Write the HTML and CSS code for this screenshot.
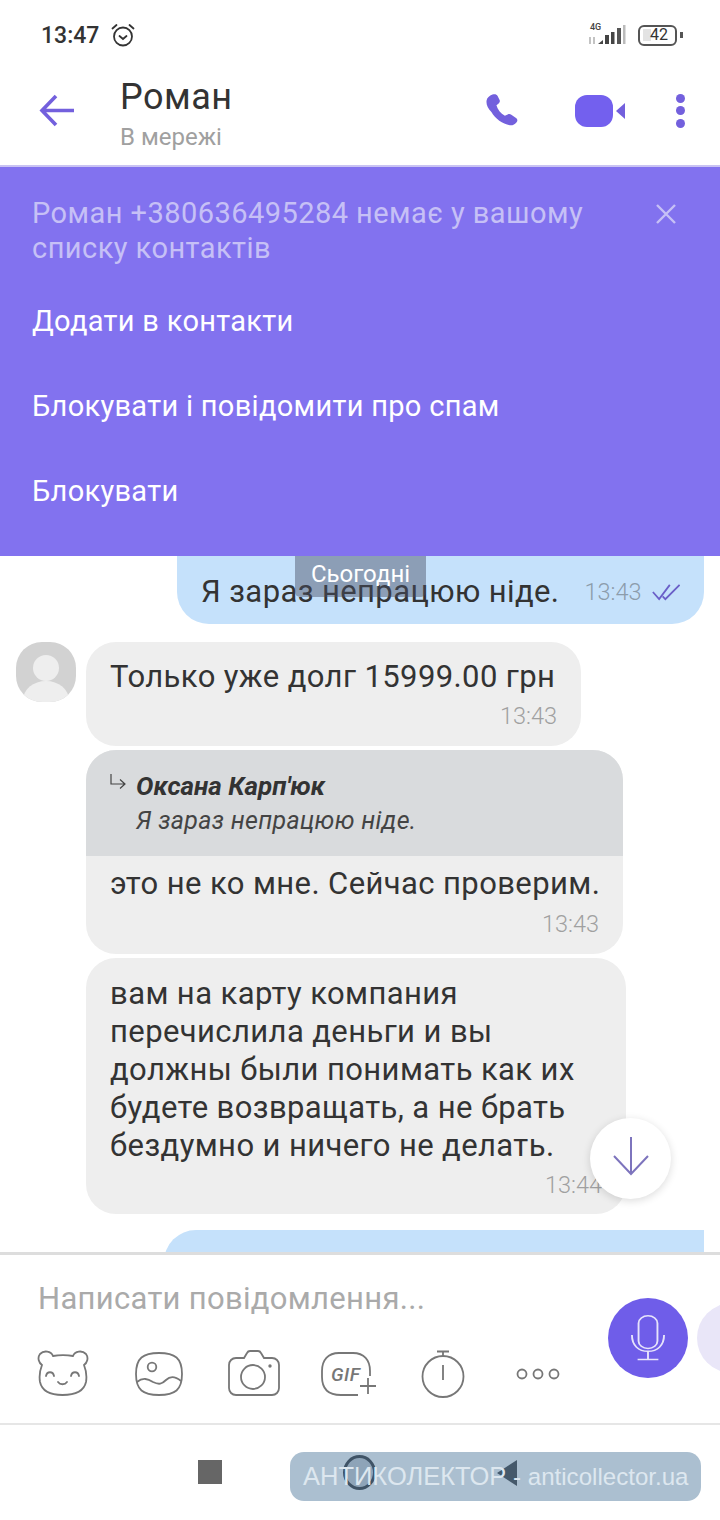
FILE: index.html
```html
<!DOCTYPE html>
<html lang="uk">
<head>
    <meta charset="UTF-8">
    <title>Роман</title>
    <link rel="stylesheet" href="styles.css">
</head>
<body>
<div class="screen">
    <div class="status-bar">
        <span class="clock">13:47</span>
        <svg class="alarm" width="26" height="26" viewBox="0 0 26 26" fill="none" stroke="#333" stroke-width="1.8" stroke-linecap="round"><circle cx="13" cy="14.5" r="9"/><path d="M9.5 14l3.5 3 3.5-3M2.500 6.500l4-3.500M23.500 6.500l-4-3.500"/></svg>
        <span class="status-right">
            <svg width="40" height="26" viewBox="0 0 40 26">
                <text x="3" y="8" class="net-label">4G</text>
                <path d="M3 15v7M7 15v7" stroke="#aaa" stroke-width="1.400" fill="none"/>
                <path d="M11 22l5-4v4z" fill="#444"/>
                <rect x="18" y="13" width="4" height="9" fill="#444"/>
                <rect x="24" y="10" width="3.500" height="12" fill="#444"/>
                <rect x="30" y="6" width="4" height="16" fill="#555"/>
                <rect x="36" y="3" width="2.500" height="19" fill="#bbb"/>
            </svg>
            <span class="battery"><span class="battery-level">42</span></span>
            <span class="battery-nub"></span>
        </span>
    </div>

    <header class="top-bar">
        <svg class="top-icon" width="36" height="36" viewBox="0 0 36 36" fill="none" stroke="#7360dd" stroke-width="3.6"><path d="M35 17.500H3M17 3L3 17.500 17 32"/></svg>
        <div class="peer">
            <div class="peer-name">Роман</div>
            <div class="peer-status">В мережі</div>
        </div>
        <svg class="top-icon" width="34" height="34" viewBox="2.500 1 29 33" preserveAspectRatio="none"><path d="M8 1.500c2-.8 3.600-.3 4.400 1.400l1.700 4c.5 1.300.2 2.300-.8 3.200l-1.900 1.700c.9 3.900 3.600 8 7.200 10.300l2.400-1.300c1.100-.6 2.100-.5 3.100.3l4 3.200c1.400 1.200 1.500 2.600.5 4-1.400 2-3.500 3.400-5.800 3-6.200-1-12.400-6.500-15.700-12.800C3.900 14.700 2.500 10.700 3 7.300c.3-2.500 2.400-4.800 5-5.800z" fill="#7360dd"/></svg>
        <svg class="top-icon video" width="52" height="34" viewBox="0 0 52 34"><rect x="1" y="1" width="38" height="32" rx="12" fill="#7360ee"/><path d="M51 9v16l-9-8z" fill="#7360dd"/></svg>
        <div class="top-icon more"><i></i><i></i><i></i></div>
    </header>

    <section class="banner">
        <div class="banner-head">
            <p class="banner-text">Роман +380636495284 немає у вашому списку контактів</p>
            <svg class="banner-close" width="22" height="22" viewBox="0 0 22 22" stroke="#c6c0f6" stroke-width="2.400"><path d="M2 2l18 18M20 2L2 20"/></svg>
        </div>
        <div class="banner-action">Додати в контакти</div>
        <div class="banner-action">Блокувати і повідомити про спам</div>
        <div class="banner-action">Блокувати</div>
    </section>

    <main class="chat">
        <div class="msg-out first">
            <span class="msg-text">Я зараз непрацюю ніде.</span>
            <span class="time">13:43</span>
            <svg width="32" height="20" viewBox="0 0 32 20" fill="none" stroke="#6a5fc8" stroke-width="2"><path d="M1 10l7 8L20 2M12 15l3 3L31 2"/></svg>
        </div>

        <div class="row">
            <div class="avatar">
                <svg width="60" height="60" viewBox="0 0 60 60"><circle cx="30" cy="26" r="13" fill="#eeeeee"/><ellipse cx="30" cy="58" rx="23" ry="19" fill="#eeeeee"/></svg>
            </div>
            <div class="bubble msg-debt">
                <div class="msg-text">Только уже долг 15999.00 грн</div>
                <div class="time">13:43</div>
            </div>
        </div>

        <div class="bubble msg-reply">
            <div class="quote">
                <svg class="quote-arrow" width="16" height="16" viewBox="0 0 16 16" fill="none" stroke="#444" stroke-width="1.200"><path d="M1 0v10h14M10 5.500l5 4.500-5 4.500"/></svg>
                <div>
                    <div class="quote-name">Оксана Карп'юк</div>
                    <div class="quote-text">Я зараз непрацюю ніде.</div>
                </div>
            </div>
            <div class="msg-body">
                <div class="msg-text">это не ко мне. Сейчас проверим.</div>
                <div class="time">13:43</div>
            </div>
        </div>

        <div class="bubble msg-long">
            <div class="msg-text">вам на карту компания перечислила деньги и вы должны были понимать как их будете возвращать, а не брать бездумно и ничего не делать.</div>
            <div class="time">13:44</div>
        </div>

        <div class="msg-out last"></div>

        <div class="date-badge">Сьогодні</div>
        <div class="scroll-down">
            <svg width="36" height="44" viewBox="0 0 36 44" fill="none" stroke="#7d74bd" stroke-width="2"><path d="M18 0v37M1 19l17 18 17-18"/></svg>
        </div>
    </main>

    <footer class="composer">
        <div class="placeholder">Написати повідомлення...</div>
        <div class="tools">
            <svg class="tool-bear" width="52" height="48" viewBox="0 0 52 48" fill="none" stroke="#777" stroke-width="1.800" stroke-linecap="round"><path d="M16 6C21 5 31 5 36 6C38 1 45 0 49 4C52 8 50 13 47 15C49 20 50 26 49 32C47 41 38 45 25.500 45C13 45 5 41 3 32C2 26 3 20 5 15C2 13 0 8 3 4C7 0 14 1 16 6z"/><path d="M9 26C10 21 16 21 17 26M34 26C35 21 41 21 42 26M21 32c2 3 7 3 9 0"/></svg>
            <svg class="tool-image" width="48" height="48" viewBox="0 0 48 48" fill="none" stroke="#777" stroke-width="1.800"><path d="M24 3C40 3 47 8 47 24C47 40 40 45 24 45C8 45 1 40 1 24C1 8 8 3 24 3z"/><circle cx="17" cy="17" r="4.300"/><path d="M2 32C8 27 13 29 18 32C24 35 27 34 31 30C35 26 40 26 46 31"/></svg>
            <svg class="tool-camera" width="52" height="48" viewBox="0 0 52 48" fill="none" stroke="#777" stroke-width="1.800"><path d="M8 8h8l3-5c.5-1 1-2 3-2h8c2 0 2.500 1 3 2l3 5h8c4 0 7 3 7 7v23c0 4-3 7-7 7H8c-4 0-7-3-7-7V15c0-4 3-7 7-7z"/><circle cx="25" cy="27" r="12"/><circle cx="42" cy="16" r="1.700" fill="#777" stroke="none"/></svg>
            <div class="tool-gif">
                <span class="gif-label">GIF</span>
                <svg width="56" height="48" viewBox="0 0 56 48" fill="none" stroke="#777" stroke-width="1.800"><path d="M37 45H20C7 45 1 39 1 27V21C1 10 7 3 18 3H32C43 3 49 10 49 21V26M39 36H55M47 28V44"/></svg>
            </div>
            <svg class="tool-timer" width="44" height="48" viewBox="0 0 44 48" fill="none" stroke="#777" stroke-width="1.800"><circle cx="22" cy="26.500" r="20.500"/><path d="M22 6V2M16 1.500H28M22 15V30"/></svg>
            <svg class="tool-more" width="44" height="48" viewBox="0 0 44 48" fill="none" stroke="#777" stroke-width="1.800"><circle cx="6" cy="24" r="4.500"/><circle cx="22" cy="24" r="4.500"/><circle cx="38" cy="24" r="4.500"/></svg>
        </div>
        <div class="mic">
            <svg width="34" height="46" viewBox="0 0 36 62" preserveAspectRatio="none" fill="none" stroke="#e6e3fb" stroke-width="2"><rect x="8" y="1" width="20" height="44" rx="10"/><path d="M1 27c0 14 7 22 17 22s17-8 17-22M18 49v11M7 60h22"/></svg>
        </div>
        <div class="send-peek"></div>
    </footer>

    <nav class="nav-bar">
        <span class="nav-square"></span>
    </nav>

    <!-- watermark sits on top of the nav buttons, its text runs over them -->
    <div class="watermark">
        <span class="nav-circle"></span>
        <span class="nav-back"></span>
        <span class="watermark-text"><span class="watermark-name">АНТИКОЛЕКТОР</span> - anticollector.ua</span>
    </div>
</div>
</body>
</html>
```

FILE: styles.css
```css
/* Base */
* {
    box-sizing: border-box;
    margin: 0;
    padding: 0;
}
body {
    font-family: Roboto, sans-serif;
    background-color: #ffffff;
}
.screen {
    position: relative;
    width: 720px;
    height: 1520px;
    display: flex;
    flex-direction: column;
    overflow: hidden;
    color: #333333;
}

/* Status bar */
.status-bar {
    height: 66px;
    padding: 4px 37px 0 41px;
    display: flex;
    align-items: center;
}
.clock {
    font-size: 23px;
    font-weight: 500;
    color: #333333;
}
.alarm {
    margin-left: 11px;
}
.status-right {
    margin-left: auto;
    display: flex;
    align-items: center;
}
.net-label {
    font-family: Roboto, sans-serif;
    font-size: 9px;
    font-weight: 500;
    fill: #444444;
}
.battery {
    width: 39px;
    height: 21px;
    margin-left: 11px;
    padding: 2px 0 2px 3px;
    border: 2.5px solid #555555;
    border-radius: 6px;
    display: block;
}
.battery-level {
    display: block;
    height: 12px;
    padding-left: 7px;
    background: linear-gradient(to right, #e3e3e3 8px, transparent 8px);
    font-size: 16px;
    line-height: 12px;
    color: #333333;
    white-space: nowrap;
}
.battery-nub {
    width: 3px;
    height: 6px;
    margin-left: 3px;
    background-color: #555555;
}

/* Header */
.top-bar {
    height: 101px;
    padding: 0 0 6px 39px;
    display: flex;
    align-items: center;
    border-bottom: 2px solid #c9c3f3;
}
.top-icon {
    flex-shrink: 0;
    margin-bottom: 4px;
}
.peer {
    margin-left: 45px;
    width: 366px;
    flex-shrink: 0;
}
.peer-name {
    font-size: 36px;
    line-height: 42px;
    letter-spacing: 0.5px;
    color: #333333;
}
.peer-status {
    margin-top: 6px;
    font-size: 24px;
    line-height: 26px;
    color: #a0a0a0;
}
.video {
    margin-left: 54px;
}
.more {
    margin-left: 50px;
    display: flex;
    flex-direction: column;
    gap: 3.5px;
}
.more i {
    width: 9px;
    height: 9px;
    border-radius: 50%;
    background-color: #7360dd;
}

/* Unknown contact banner */
.banner {
    height: 389px;
    padding: 29px 32px 0;
    background-color: #8272ef;
    color: #ffffff;
}
.banner-head {
    display: flex;
    justify-content: space-between;
    margin-bottom: 12px;
}
.banner-text {
    width: 590px;
    font-size: 29px;
    line-height: 35px;
    letter-spacing: 0.45px;
    color: #c6c0f6;
}
.banner-close {
    margin: 7px 11px 0 0;
}
.banner-action {
    height: 85px;
    display: flex;
    align-items: center;
    font-size: 29px;
    letter-spacing: 0.3px;
    color: #ffffff;
}

/* Chat */
.chat {
    position: relative;
    height: 696px;
    overflow: hidden;
    display: flex;
    flex-direction: column;
    align-items: flex-start;
}
.chat > * {
    flex-shrink: 0;
}
.msg-text {
    font-size: 31px;
    line-height: 38px;
    letter-spacing: 0.4px;
    color: #333333;
}
.time {
    font-size: 23.5px;
    font-weight: 300;
    color: #a0a0a0;
}
.msg-out {
    align-self: flex-end;
    margin-right: 16px;
    background-color: #c5e1fb;
}
.msg-out.first {
    width: 527px;
    height: 68px;
    padding: 4px 24px 0;
    border-radius: 0 0 32px 32px;
    display: flex;
    align-items: center;
    margin-bottom: 18px;
}
.msg-out.first .msg-text {
    margin-right: 25px;
    white-space: nowrap;
}
.msg-out.first .time {
    margin-right: 10px;
    color: #8c9cab;
}
.msg-out.last {
    width: 540px;
    height: 40px;
    margin-top: 16px;
    border-radius: 32px 0 0 0;
}
.row {
    display: flex;
    padding-left: 16px;
    gap: 10px;
}
.avatar {
    width: 60px;
    height: 60px;
    border-radius: 26px;
    background-color: #d2d2d2;
    overflow: hidden;
}
.bubble {
    background-color: #eeeeee;
    border-radius: 30px;
}
.bubble .time {
    text-align: right;
}
.msg-debt {
    width: 495px;
    height: 104px;
    padding: 16px 24px 0;
}
.msg-debt .msg-text,
.msg-body .msg-text {
    white-space: nowrap;
}
.msg-debt .time {
    margin-top: 6px;
}
.msg-reply {
    width: 537px;
    height: 204px;
    margin: 4px 0 0 86px;
    overflow: hidden;
}
.quote {
    height: 106px;
    padding: 21px 24px 0;
    background-color: #d9dbdd;
    display: flex;
    gap: 10px;
}
.quote-arrow {
    margin-top: 3px;
}
.quote-name {
    font-size: 26px;
    line-height: 30px;
    font-weight: 700;
    font-style: italic;
    color: #333333;
}
.quote-text {
    margin-top: 5px;
    font-size: 25px;
    line-height: 30px;
    font-style: italic;
    letter-spacing: 0.3px;
    color: #444444;
}
.msg-body {
    padding: 9px 24px 0;
}
.msg-body .time {
    margin-top: 7px;
}
.msg-long {
    width: 540px;
    height: 256px;
    margin: 4px 0 0 86px;
    padding: 17px 24px 0;
}
.msg-long .time {
    margin-top: 6px;
}
.date-badge {
    position: absolute;
    left: 295px;
    top: 0;
    width: 131px;
    height: 41px;
    padding-top: 4px;
    background-color: rgba(70, 78, 98, 0.45);
    border-radius: 0 0 5px 5px;
    text-align: center;
    font-size: 24px;
    color: #ffffff;
}
.scroll-down {
    position: absolute;
    left: 590px;
    top: 562px;
    width: 81px;
    height: 81px;
    border-radius: 50%;
    background-color: #ffffff;
    box-shadow: 0 2px 8px rgba(0, 0, 0, 0.14);
    display: flex;
    align-items: center;
    justify-content: center;
}

/* Composer */
.composer {
    position: relative;
    height: 173px;
    flex-shrink: 0;
    border-top: 3px solid #dddddd;
    border-bottom: 2px solid #e6e6e6;
    padding: 0 0 0 37px;
    overflow: hidden;
    background-color: #ffffff;
}
.placeholder {
    margin: 25px 0 0 1px;
    font-size: 31px;
    line-height: 38px;
    letter-spacing: 0.3px;
    color: #aaaaaa;
}
.tools {
    margin-top: 32px;
    display: flex;
}
.tool-image {
    margin-left: 46px;
}
.tool-camera {
    margin-left: 45px;
}
.tool-gif {
    position: relative;
    width: 56px;
    height: 48px;
    margin-left: 41px;
}
.tool-timer {
    margin-left: 44px;
}
.tool-more {
    margin-left: 51px;
}
.gif-label {
    position: absolute;
    left: 10px;
    top: 13px;
    font-size: 19px;
    font-weight: 500;
    font-style: italic;
    letter-spacing: 0.5px;
    color: #777777;
}
.mic {
    position: absolute;
    left: 608px;
    top: 43px;
    width: 80px;
    height: 80px;
    border-radius: 50%;
    background-color: #6f5de9;
    display: flex;
    align-items: center;
    justify-content: center;
}
.send-peek {
    position: absolute;
    left: 697px;
    top: 48px;
    width: 70px;
    height: 70px;
    border-radius: 50%;
    background-color: #e9e6f8;
}

/* Navigation */
.nav-bar {
    flex: 1;
    padding: 35px 0 0 198px;
}
.nav-square {
    display: block;
    width: 24px;
    height: 24px;
    background-color: #666666;
}

/* Watermark */
.watermark {
    position: absolute;
    left: 290px;
    top: 1452px;
    width: 411px;
    height: 49px;
    padding: 10px 0 0 13px;
    border-radius: 14px;
    background-color: #abbfd0;
    white-space: nowrap;
}
.watermark-text {
    position: relative;
    font-family: "Liberation Sans", sans-serif;
    font-size: 24.1px;
    color: #dde7ef;
}
.watermark-name {
    font-size: 25.5px;
}
.nav-circle {
    position: absolute;
    left: 53px;
    top: 3px;
    width: 33px;
    height: 35px;
    border: 3.5px solid #3f5366;
    border-radius: 50%;
    background-color: #8ea4b8;
}
.nav-back {
    position: absolute;
    left: 207px;
    top: 8px;
    border-style: solid;
    border-width: 13px 20px 13px 0;
    border-color: transparent #45596b transparent transparent;
}
```
